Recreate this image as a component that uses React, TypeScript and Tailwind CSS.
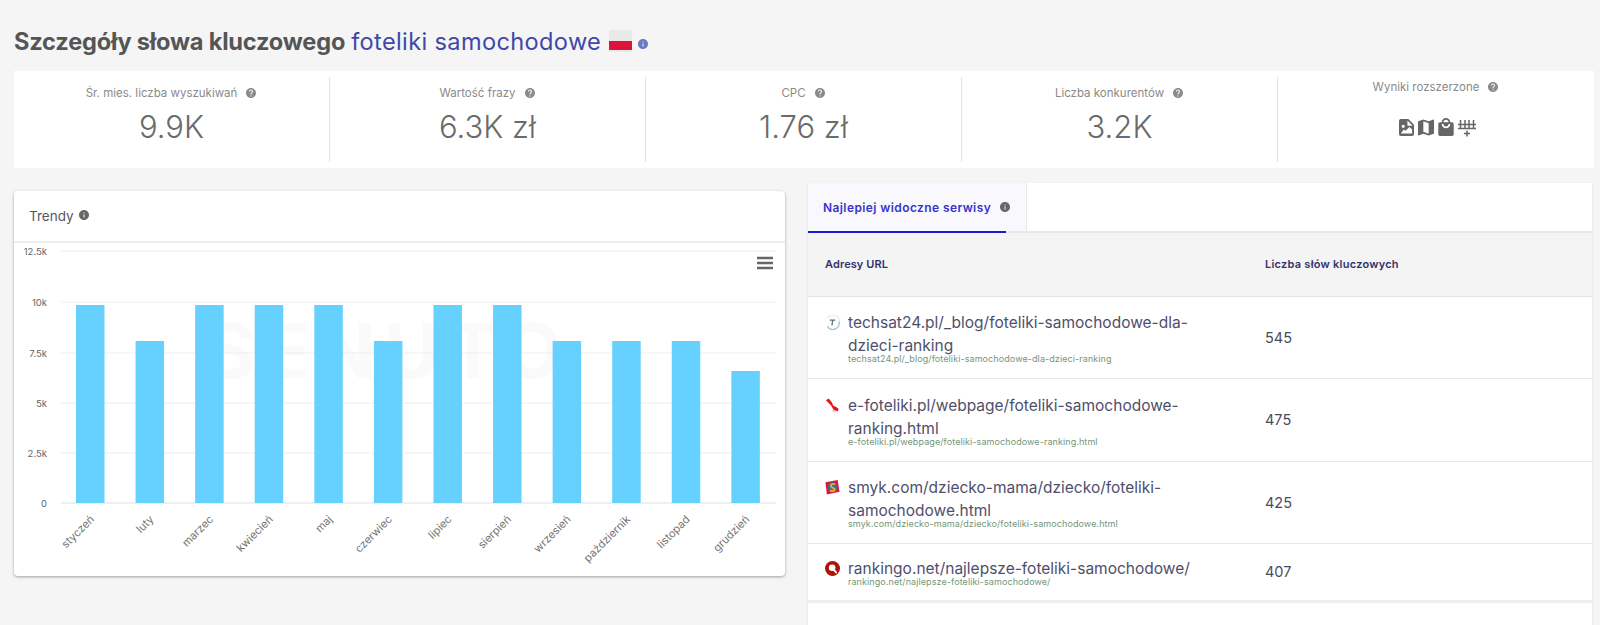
import React from 'react';

const helpPath =
  'M12 2C6.48 2 2 6.48 2 12s4.48 10 10 10 10-4.48 10-10S17.52 2 12 2zm1 17h-2v-2h2v2zm2.07-7.75l-.9.92C13.45 12.9 13 13.5 13 15h-2v-.5c0-1.1.45-2.1 1.17-2.83l1.24-1.26c.37-.36.59-.86.59-1.41 0-1.1-.9-2-2-2s-2 .9-2 2H8c0-2.21 1.79-4 4-4s4 1.79 4 4c0 .88-.36 1.68-.93 2.25z';
const infoPath =
  'M12 2C6.48 2 2 6.48 2 12s4.48 10 10 10 10-4.48 10-10S17.52 2 12 2zm1 15h-2v-6h2v6zm0-8h-2V7h2v2z';

const Glyph: React.FC<{ d: string; className: string }> = ({ d, className }) => (
  <svg viewBox="0 0 24 24" className={className} fill="currentColor">
    <path d={d} />
  </svg>
);

const stats = [
  { label: 'Śr. mies. liczba wyszukiwań', value: '9.9K' },
  { label: 'Wartość frazy', value: '6.3K zł' },
  { label: 'CPC', value: '1.76 zł' },
  { label: 'Liczba konkurentów', value: '3.2K' },
];

const months = [
  { name: 'styczeń', top: 305 },
  { name: 'luty', top: 341 },
  { name: 'marzec', top: 305 },
  { name: 'kwiecień', top: 305 },
  { name: 'maj', top: 305 },
  { name: 'czerwiec', top: 341 },
  { name: 'lipiec', top: 305 },
  { name: 'sierpień', top: 305 },
  { name: 'wrzesień', top: 341 },
  { name: 'październik', top: 341 },
  { name: 'listopad', top: 341 },
  { name: 'grudzień', top: 371 },
];

const yTicks = [
  { label: '12.5k', y: 251 },
  { label: '10k', y: 302 },
  { label: '7.5k', y: 353 },
  { label: '5k', y: 403 },
  { label: '2.5k', y: 453 },
  { label: '0', y: 503 },
];

const TechsatIcon = () => (
  <svg viewBox="0 0 16 16" className="w-[15px] h-[15px] shrink-0">
    <path d="M2.5 3A6.8 6.8 0 0 1 15 7.500" fill="none" stroke="#e3eef0" strokeWidth="1.500" />
    <path d="M15 7a6.800 6.800 0 0 1-12.500 5" fill="none" stroke="#9cc8c8" strokeWidth="1.500" />
    <path d="M5 5.500h6M8.300 5.500l-.9 5.500" fill="none" stroke="#5d7178" strokeWidth="1.400" />
  </svg>
);

const FotelikiIcon = () => (
  <svg viewBox="0 0 16 16" className="w-[15px] h-[15px] shrink-0">
    <path d="M1 2.500L4 .5l3.500 4.500 1.500 3.500 2 .5 3.500 2.500-1 3L9 12.500l-2.500-4.500z" fill="#e8141c" />
    <path d="M7.500 12l3 1 1 2.500-3-.5z" fill="#f0c4c4" />
  </svg>
);

const SmykIcon = () => (
  <svg viewBox="0 0 16 16" className="w-[15px] h-[15px] shrink-0">
    <path d="M.5 2.500l13-2.500 2 12.500-13.500 3z" fill="#e0173c" />
    <circle cx="8" cy="7.500" r="5" fill="#2f6fb0" />
    <path d="M10.800 4.800C8 3.300 5 5 6.800 7.200s4.400 1.500 3.400 3.500-3.600 1.200-5 .3" fill="none" stroke="#e8b32a" strokeWidth="1.900" />
  </svg>
);

const RankingoIcon = () => (
  <svg viewBox="0 0 16 16" className="w-[15px] h-[15px] shrink-0">
    <circle cx="8" cy="8" r="8" fill="#b01208" />
    <circle cx="7.600" cy="7.200" r="3.500" fill="#fff" />
    <path d="M9 9l3.500 4" stroke="#fff" strokeWidth="2" />
  </svg>
);

const rows = [
  {
    icon: <TechsatIcon />,
    lines: ['techsat24.pl/_blog/foteliki-samochodowe-dla-', 'dzieci-ranking'],
    sub: 'techsat24.pl/_blog/foteliki-samochodowe-dla-dzieci-ranking',
    count: 545,
    rowClass: 'h-[82px] border-b border-[#e6e6e6]',
  },
  {
    icon: <FotelikiIcon />,
    lines: ['e-foteliki.pl/webpage/foteliki-samochodowe-', 'ranking.html'],
    sub: 'e-foteliki.pl/webpage/foteliki-samochodowe-ranking.html',
    count: 475,
    rowClass: 'h-[83px] border-b border-[#e6e6e6]',
  },
  {
    icon: <SmykIcon />,
    lines: ['smyk.com/dziecko-mama/dziecko/foteliki-', 'samochodowe.html'],
    sub: 'smyk.com/dziecko-mama/dziecko/foteliki-samochodowe.html',
    count: 425,
    rowClass: 'h-[82px] border-b border-[#e6e6e6]',
  },
  {
    icon: <RankingoIcon />,
    lines: ['rankingo.net/najlepsze-foteliki-samochodowe/'],
    sub: 'rankingo.net/najlepsze-foteliki-samochodowe/',
    count: 407,
    rowClass: 'h-[59px] border-b-[3px] border-[#eeeeee]',
  },
];

const TrendChart = () => (
  <svg viewBox="14 243 771 333" className="w-[771px] h-[333px] block">
    <text x="388" y="378" textAnchor="middle" fontSize="76" fontWeight="700" letterSpacing="8" fill="#fafafa">
      SENUTO
    </text>
    {yTicks.map((t) => (
      <g key={t.label}>
        <line x1="61" x2="776" y1={t.y} y2={t.y} stroke={t.y === 503 ? '#d9e2ee' : '#eeeeee'} strokeWidth="1" />
        <text x="47" y={t.y + 4} textAnchor="end" fontSize="9.500" fill="#666666">
          {t.label}
        </text>
      </g>
    ))}
    {months.map((m, i) => {
      const center = 61 + 59.58 * (i + 0.5);
      return (
        <g key={m.name}>
          <rect x={center - 14.8} y={m.top} width="28.500" height={503 - m.top} fill="#66d1ff" />
          <text
            x={center + 4}
            y={520}
            textAnchor="end"
            fontSize="11"
            fill="#757575"
            transform={`rotate(-45 ${center + 4} 520)`}
          >
            {m.name}
          </text>
        </g>
      );
    })}
    <path d="M757 258h16M757 263h16M757 268h16" stroke="#666666" strokeWidth="2.500" />
  </svg>
);

const RichResultIcons = () => (
  <div className="flex items-start justify-center gap-[4px] ml-[2px] mt-[25px] text-[#666666]">
    <svg viewBox="0 0 16 18" className="w-[15px] h-[17px]">
      <path
        fillRule="evenodd"
        fill="currentColor"
        d="M2 0h8l6 6v10a2 2 0 0 1-2 2H2a2 2 0 0 1-2-2V2a2 2 0 0 1 2-2zm7 1.500V7h5.500zM2 15.500h12V11l-3-2.500-4 4-2-1.500zM4.500 6a1.700 1.700 0 1 0 0 3.400 1.700 1.700 0 0 0 0-3.400z"
      />
    </svg>
    <svg viewBox="3 3 18 18" className="w-[16px] h-[17px]" fill="currentColor">
      <path d="M20.500 3l-.16.03L15 5.100 9 3 3.360 4.900c-.21.07-.36.25-.36.48V20.500c0 .28.22.5.5.5l.16-.03L9 18.900l6 2.100 5.640-1.900c.21-.07.36-.25.36-.48V3.500c0-.28-.22-.5-.5-.5zM15 19l-6-2.110V5l6 2.110V19z" />
    </svg>
    <svg viewBox="3 1 18 21" className="w-[16px] h-[18px] -mt-px" fill="currentColor">
      <path d="M19 6h-2c0-2.760-2.240-5-5-5S7 3.240 7 6H5c-1.100 0-1.990.9-1.990 2L3 20c0 1.100.9 2 2 2h14c1.100 0 2-.9 2-2V8c0-1.100-.9-2-2-2zm-7-3c1.660 0 3 1.340 3 3H9c0-1.660 1.340-3 3-3zm0 10c-2.760 0-5-2.240-5-5h2c0 1.660 1.340 3 3 3s3-1.340 3-3h2c0 2.760-2.240 5-5 5z" />
    </svg>
    <svg viewBox="0 0 18 18" className="w-[18px] h-[18px]" fill="none" stroke="currentColor" strokeWidth="1.500">
      <path d="M0 5.500h18M0 9.500h18M2.500 1v8.500M7 1v8.500M11 1v8.500M15.500 1v8.500M9 11.500v6M6 14.500h6" />
    </svg>
  </div>
);

export default function App() {
  return (
    <div className="h-[625px] overflow-hidden bg-[#f5f5f5] font-['Inter','Liberation_Sans',sans-serif]">
      <div className="flex items-center h-[71px] pl-[14px] pt-[13px]">
        <h1 className="text-[23.600px] font-bold tracking-[-0.2px] text-[#555555]">Szczegóły słowa kluczowego</h1>
        <span className="ml-[6px] text-[23.600px] tracking-[0.35px] text-[#3f48a8]">foteliki samochodowe</span>
        <div className="ml-[8px] w-[23px] h-[22px] flex flex-col mt-[-2px]">
          <div className="h-[11px] bg-[#e9e9e9]" />
          <div className="h-[9px] bg-[#dc143c]" />
          <div className="h-[2px] bg-[#e9e9e9]" />
        </div>
        <Glyph d={infoPath} className="ml-[5px] mt-[4px] w-[12px] h-[12px] text-[#6b78c0]" />
      </div>

      <div className="ml-[14px] mr-[6px] h-[97px] bg-white grid grid-cols-5 py-[6px]">
        {stats.map((s) => (
          <div key={s.label} className="text-center pt-[9px] border-r border-[#e3e3e3]">
            <div className="flex items-center justify-center gap-[8px] text-[11.500px] leading-[14px] text-[#8a8a8a]">
              {s.label}
              <Glyph d={helpPath} className="w-[12px] h-[12px] text-[#8a8a8a]" />
            </div>
            <div className="mt-[5px] text-[31px] leading-[44px] font-light text-[#6b6b6b]">{s.value}</div>
          </div>
        ))}
        <div className="text-center pt-[3px]">
          <div className="flex items-center justify-center gap-[8px] text-[11.500px] leading-[14px] text-[#8a8a8a]">
            Wyniki rozszerzone
            <Glyph d={helpPath} className="w-[12px] h-[12px] text-[#8a8a8a]" />
          </div>
          <RichResultIcons />
        </div>
      </div>

      <div className="flex items-start pl-[14px] pr-[8px] gap-[23px]">
        <div className="mt-[23px] w-[771px] h-[385px] shrink-0 bg-white rounded-[4px] shadow-[0_1px_3px_rgba(0,0,0,0.35)]">
          <div className="h-[52px] flex items-center pl-[15px] border-b-2 border-[#eeeeee]">
            <span className="text-[13.500px] text-[#555566]">Trendy</span>
            <Glyph d={infoPath} className="ml-[4px] -mt-[3px] w-[12px] h-[12px] text-[#666666]" />
          </div>
          <TrendChart />
        </div>

        <div className="mt-[15px] flex-1 bg-white shadow-[0_1px_2px_rgba(0,0,0,0.12)]">
          <div className="h-[50px] flex border-b-2 border-[#e8e8e8]">
            <div className="w-[219px] bg-[#f8f8fd] border-r border-[#e8e8e8]">
              <div className="w-[198px] h-[50px] flex items-center pl-[15px] pt-[2px] border-b-2 border-[#1a1ad0]">
                <span className="text-[12px] font-semibold tracking-[0.4px] whitespace-nowrap text-[#3535cc]">Najlepiej widoczne serwisy</span>
                <Glyph d={infoPath} className="ml-[8px] shrink-0 -mt-[3px] w-[12px] h-[12px] text-[#666666]" />
              </div>
            </div>
          </div>

          <div className="h-[64px] flex items-center bg-[#f4f4f4] border-b border-[#e4e4e4]">
            <div className="w-[457px] pl-[17px] text-[11px] font-semibold tracking-[0.1px] text-[#33336b]">Adresy URL</div>
            <div className="text-[11px] font-semibold tracking-[0.25px] text-[#33336b]">Liczba słów kluczowych</div>
          </div>

          {rows.map((r) => (
            <div key={r.sub} className={`flex items-center ${r.rowClass}`}>
              <div className="w-[457px] pl-[17px] flex items-start gap-[8px]">
                <div className="pt-[4px]">{r.icon}</div>
                <div>
                  {r.lines.map((line) => (
                    <div key={line} className="text-[15.500px] leading-[23px] text-[#4f4f6c]">
                      {line}
                    </div>
                  ))}
                  <div className="-mt-[3px] text-[9px] leading-[10px] tracking-[0.09px] text-[#76967a]">{r.sub}</div>
                </div>
              </div>
              <div className="text-[14.500px] text-[#4b4b5b]">{r.count}</div>
            </div>
          ))}
          <div className="h-[30px]" />
        </div>
      </div>
    </div>
  );
}
